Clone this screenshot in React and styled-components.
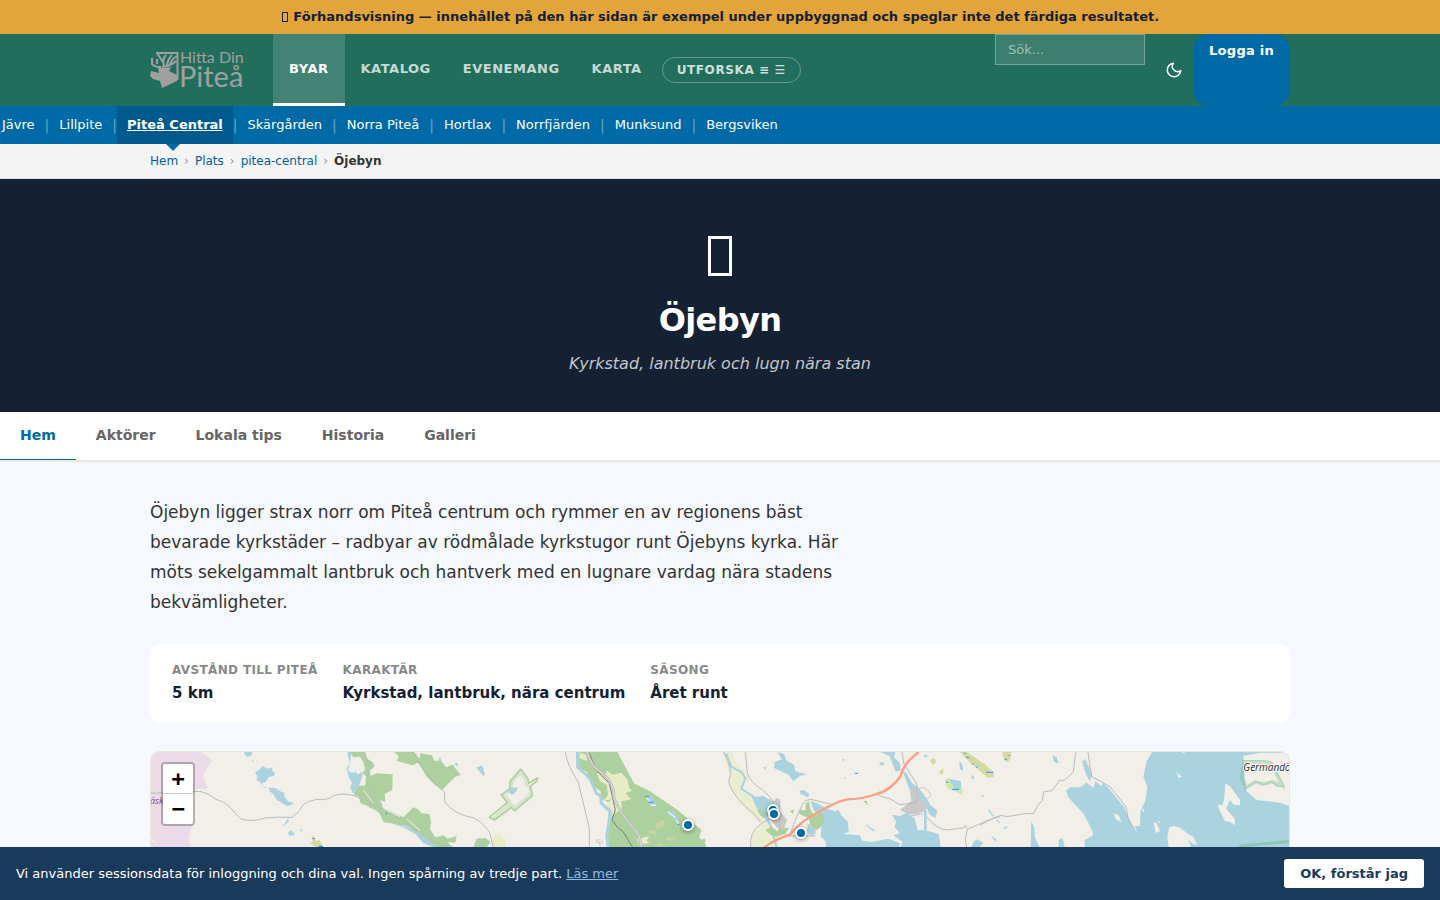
import React, { useState } from "react";
import styled, { createGlobalStyle } from "styled-components";

const GlobalStyle = createGlobalStyle`
  * {
    box-sizing: border-box;
  }

  body {
    margin: 0;
    background: #f5f8fd;
    color: #333;
    font-family: "DejaVu Sans", Verdana, sans-serif;
    font-size: 16px;
    overflow-x: hidden;
  }

  button, input {
    font-family: inherit;
  }
`;

const Container = styled.div`
  width: 100%;
  max-width: 1180px;
  margin: 0 auto;
  padding: 0 20px;
`;

const PreviewBanner = styled.div`
  padding: 8px 16px;
  background: #e2a43b;
  color: #142133;
  font-size: 13px;
  font-weight: 700;
  line-height: 18px;
  text-align: center;
`;

const BannerIcon = styled.span`
  display: inline-block;
  width: 6px;
  height: 10px;
  margin: 0 1px;
  border: 1px solid currentColor;
  vertical-align: -1px;
`;

const Header = styled.header`
  background: #216e5c;
`;

const HeaderRow = styled(Container)`
  display: flex;
  height: 72px;
`;

const LogoLink = styled.a`
  display: flex;
  align-items: center;
  width: 93px;
  margin-right: 30px;
`;

const MainNav = styled.nav`
  display: flex;
  flex: 1;
`;

const NavLink = styled.a`
  display: flex;
  align-items: center;
  padding: 0 16px;
  border-bottom: 3px solid ${(props) => (props.$active ? "#fff" : "transparent")};
  background: ${(props) => (props.$active ? "rgba(255, 255, 255, 0.15)" : "none")};
  color: ${(props) => (props.$active ? "#fff" : "rgba(255, 255, 255, 0.75)")};
  font-size: 13px;
  font-weight: 700;
  letter-spacing: 0.04em;
  text-transform: uppercase;
  text-decoration: none;
`;

const ExploreButton = styled.button`
  align-self: center;
  height: 26px;
  margin-left: 4px;
  padding: 0 14px;
  border: 1px solid rgba(255, 255, 255, 0.3);
  border-radius: 13px;
  background: none;
  color: rgba(255, 255, 255, 0.8);
  font-size: 12px;
  font-weight: 700;
  letter-spacing: 0.05em;
  white-space: nowrap;
`;

const Tools = styled.div`
  display: flex;
  align-items: flex-start;
`;

const SearchInput = styled.input`
  width: 150px;
  height: 31px;
  padding: 0 12px;
  border: 1px solid rgba(255, 255, 255, 0.3);
  border-radius: 0;
  background: rgba(255, 255, 255, 0.12);
  color: #fff;
  font-size: 13px;

  &::placeholder {
    color: rgba(255, 255, 255, 0.5);
  }
`;

const ThemeButton = styled.button`
  display: flex;
  align-self: center;
  margin: 0 10px 0 20px;
  padding: 0;
  border: none;
  background: none;
  color: #fff;
`;

const LoginLink = styled.a`
  align-self: stretch;
  padding: 8px 16px;
  border-radius: 16px;
  background: #006aa7;
  color: #fff;
  font-size: 13px;
  font-weight: 700;
  line-height: 18px;
  letter-spacing: 0.02em;
  text-decoration: none;
`;

const PlaceNav = styled.nav`
  position: relative;
  height: 38px;
  background: #006aa7;

  &::after {
    content: "";
    position: absolute;
    top: 100%;
    left: 166px;
    border: 7px solid transparent;
    border-top-color: #006aa7;
    border-bottom: none;
  }
`;

const PlaceList = styled.ul`
  display: flex;
  height: 100%;
  margin: 0 0 0 -8px;
  padding: 0;
  list-style: none;
  font-size: 13px;
  line-height: 38px;
  white-space: nowrap;

  li + li::before {
    content: "|";
    color: rgba(255, 255, 255, 0.4);
    font-size: 14px;
  }

  li {
    display: flex;
  }
`;

const PlaceLink = styled.a`
  padding: 0 10px;
  background: ${(props) => (props.$active ? "#005a8e" : "none")};
  color: #fff;
  font-weight: ${(props) => (props.$active ? 700 : 400)};
  text-decoration: ${(props) => (props.$active ? "underline" : "none")};
`;

const CrumbBar = styled.nav`
  border-bottom: 1px solid #ddd;
  background: #f4f4f4;
`;

const Crumbs = styled(Container)`
  display: flex;
  align-items: center;
  gap: 6px;
  height: 34px;
  color: #999;
  font-size: 12px;

  a {
    color: #00609c;
    text-decoration: none;
  }

  strong {
    color: #333;
  }
`;

const Hero = styled.section`
  display: flex;
  flex-direction: column;
  align-items: center;
  padding: 57px 20px 36px;
  background: #142133;
  color: #fff;
  text-align: center;
`;

const HeroIcon = styled.div`
  width: 24px;
  height: 40px;
  margin-bottom: 24px;
  border: 3px solid #fff;
`;

const HeroTitle = styled.h1`
  margin: 0 0 11px;
  font-size: 32px;
  line-height: 40px;
  letter-spacing: -0.02em;
`;

const Tagline = styled.p`
  margin: 0;
  color: rgba(255, 255, 255, 0.75);
  font-size: 16px;
  font-style: italic;
  line-height: 25px;
`;

const TabBar = styled.nav`
  display: flex;
  height: 50px;
  border-bottom: 2px solid #ebe8e0;
  background: #fff;
`;

const Tab = styled.a`
  padding: 0 20px;
  border-bottom: 1px solid ${(props) => (props.$active ? "#006aa7" : "transparent")};
  color: ${(props) => (props.$active ? "#006aa7" : "#666")};
  font-size: 14px;
  font-weight: 700;
  line-height: 46px;
  text-decoration: none;
`;

const Main = styled(Container)`
  padding-top: 35px;
  padding-bottom: 80px;
`;

const Intro = styled.p`
  max-width: 720px;
  margin: 0 0 27px;
  font-size: 17px;
  line-height: 30px;
`;

const Facts = styled.dl`
  display: flex;
  flex-wrap: wrap;
  gap: 25px;
  margin: 0 0 28px;
  padding: 16px 22px;
  border-radius: 10px;
  background: #fff;
`;

const Fact = styled.div`
  dt {
    color: #888;
    font-size: 12px;
    font-weight: 700;
    line-height: 20px;
    letter-spacing: 0.03em;
    text-transform: uppercase;
  }

  dd {
    margin: 0;
    color: #142133;
    font-size: 15px;
    font-weight: 700;
    line-height: 27px;
  }
`;

const MapFrame = styled.div`
  position: relative;
  height: 400px;
  border: 1px solid #e8e5dd;
  border-radius: 10px;
  background: #f2efe9;
  overflow: hidden;
`;

const MapDrawing = styled.svg`
  display: block;
  width: 1138px;
  min-width: 100%;
  height: 100%;
`;

const ZoomControl = styled.div`
  position: absolute;
  top: 10px;
  left: 10px;
  border: 2px solid rgba(0, 0, 0, 0.25);
  border-radius: 4px;
  background-clip: padding-box;
`;

const ZoomButton = styled.button`
  display: block;
  width: 30px;
  height: 30px;
  padding: 0;
  border: none;
  border-bottom: ${(props) => (props.$first ? "1px solid #ccc" : "none")};
  border-radius: ${(props) => (props.$first ? "2px 2px 0 0" : "0 0 2px 2px")};
  background: #fff;
  color: #000;
  font-family: "DejaVu Sans Mono", monospace;
  font-size: 22px;
  font-weight: 700;
  line-height: 30px;
`;

const Marker = styled.button`
  position: absolute;
  width: 12px;
  height: 12px;
  padding: 0;
  border: 2px solid #fff;
  border-radius: 50%;
  background: #006aa7;
  box-shadow: 0 1px 4px rgba(0, 0, 0, 0.4);
`;

const CookieBar = styled.div`
  position: fixed;
  right: 0;
  bottom: 0;
  left: 0;
  display: flex;
  align-items: center;
  justify-content: space-between;
  gap: 16px;
  padding: 12px 16px;
  background: #1a3a5c;
  color: #fff;
  font-size: 13px;

  a {
    color: #90bce0;
  }
`;

const AcceptButton = styled.button`
  height: 29px;
  padding: 0 16px;
  border: none;
  border-radius: 3px;
  background: #fff;
  color: #1a3a5c;
  font-size: 13px;
  font-weight: 700;
`;

const navItems = ["Byar", "Katalog", "Evenemang", "Karta"];

const places = [
  "Jävre",
  "Lillpite",
  "Piteå Central",
  "Skärgården",
  "Norra Piteå",
  "Hortlax",
  "Norrfjärden",
  "Munksund",
  "Bergsviken",
];

const tabs = ["Hem", "Aktörer", "Lokala tips", "Historia", "Galleri"];

const facts = [
  { label: "Avstånd till Piteå", value: "5 km" },
  { label: "Karaktär", value: "Kyrkstad, lantbruk, nära centrum" },
  { label: "Säsong", value: "Året runt" },
];

const markers = [
  { name: "Öjebyns kyrkstad", left: 616, top: 52 },
  { name: "Öjebyns kyrka", left: 617, top: 56 },
  { name: "Furunäset", left: 644, top: 75 },
  { name: "Svensbyn", left: 531, top: 67 },
];

function Logo() {
  return (
    <svg width="93" height="40" viewBox="0 0 93 40" overflow="visible" role="img" aria-label="Hitta Din Piteå">
      <g fill="none" stroke="#a0a0a0">
        <path d="M6 3H27.500V30" strokeWidth="2" />
        <path
          d="M7 3L13 12M2 8V14Q4 17 11 17M7 9V14M12 17Q21 16 26 11M14 16Q12 9 16 5M17 15Q18 9 22 5M20 14Q22 9 27 6"
          strokeWidth="2"
        />
      </g>
      <path
        fill="#a0a0a0"
        d="M1 21L9 23L8 17L14 18L21 17L19 21L27 25V31L12 38L10 31L3 29L0 26Z"
      />
      <g fontFamily="Lato, sans-serif" fill="#a0a0a0">
        <text x="30" y="13" fontSize="16">Hitta Din</text>
        <text x="29" y="37" fontSize="29">Piteå</text>
      </g>
    </svg>
  );
}

function MoonIcon() {
  return (
    <svg width="18" height="18" viewBox="0 0 24 24" fill="none" stroke="currentColor" strokeWidth="2" strokeLinecap="round" strokeLinejoin="round">
      <path d="M21 12.790A9 9 0 1 1 11.210 3 7 7 0 0 0 21 12.790z" />
    </svg>
  );
}

// Four map tiles side by side, each 840 units wide
function RegionMap() {
  return (
    <MapDrawing viewBox="0 0 3414 1194" preserveAspectRatio="xMinYMin slice" aria-hidden="true">
      <g transform="translate(-33 -36)">
        <path fill="#ebdbe8" d="M30 30H176L216 60L188 108L204 144L160 150L100 250L145 294L153 330V500H30V300L58 318L86 298L110 320L70 262L30 290Z" />
        <path fill="#ebdbe8" d="M30 150H160V250L145 294L153 330H120L86 298L58 318L30 290Z" />
        <g fill="#aad3df">
          <path d="M313 36H337L334 47L322 50L314 44Z" />
          <path d="M345 98L360 86L370 78L382 86L398 82L396 92L405 99L402 107L386 112L378 125L366 130V140L385 141L373 143L363 132L357 122H349L353 110Z" />
          <path d="M386 143L405 144L420 154L434 158L432 168L445 185L461 188L455 194L442 199L425 188L410 180L400 162L390 155Z" />
          <path d="M622 36H635L630 70L624 92L634 98L648 96L655 104L662 95L668 105L660 130L652 146L654 164L638 158L630 142L636 128L626 112L624 98L619 88L629 70Z" />
          <path d="M660 180L690 204L712 208L728 240L790 262L826 282L850 310L880 322H900L860 296L820 268L760 246L730 222L700 196Z" />
          <path d="M430 258L444 236L446 244ZM446 276L454 272L464 284L448 286ZM481 267L486 270L484 276ZM337 61L341 66Z" stroke="#aad3df" strokeWidth="2" />
        </g>
        <g fill="#add19e">
          <path d="M630 36H675L682 56L700 68L703 80L690 92L692 108L710 100L758 103L757 150L734 162L736 186L720 180L727 202L790 232L820 202L834 208L845 220L868 222L874 250L860 268L880 288L905 300V312L880 308L840 282L800 258L730 246L720 220L690 200L662 190L655 168L642 164L656 138L676 136L678 108L666 100L676 88L670 66L660 50L640 52Z" />
          <path d="M762 36H822L840 56L862 50L905 74V150L880 118L850 88L832 68L818 76L790 68L770 62L776 48Z" />
        </g>
        <path fill="#d6d99f" d="M515 290L522 288L528 302L538 300L550 320L532 324L508 308L518 306Z" />
        <path stroke="#3990f0" strokeWidth="4" d="M518 296H524M536 319H549M737 220H741" />
        <g fill="none" stroke="#bbb" strokeWidth="3">
          <path d="M30 160L180 154Q205 158 228 178Q252 184 266 198L302 236Q335 248 374 234Q416 230 456 232Q476 220 490 194Q505 182 530 178Q560 182 580 168Q604 156 646 168" />
          <path d="M646 168Q700 186 750 218T840 280T905 314M672 36L684 66L683 138L690 156L724 190V208M820 36L850 88L905 150" />
        </g>
        <path fill="none" stroke="#f2efe9" strokeWidth="3" d="M670 150L700 190M730 205L780 230M800 236L850 280" />
        <text x="30" y="192" fontFamily="Open Sans, Noto Sans, sans-serif" fontSize="27" fontStyle="italic" fill="#8c4a80">äsk</text>
      </g>

      <g transform="translate(807 -36)">
        <g fill="#add19e">
          <path d="M0 40L36 46L44 64L62 60L78 82L98 74L108 88L122 104L104 112L84 132L66 150L44 134L18 108L0 76Z" />
          <path d="M0 222L20 226L32 250L30 268L46 292L70 286L84 296L110 288L106 308L82 306L100 322H40L0 282ZM170 296L196 294L212 306L200 322H160Z" />
          <path d="M478 36H592L642 130L690 154L770 208L844 270L838 292L858 314V500H556L560 290L575 228L564 208L570 190L544 176L542 154L520 138L500 96L474 80Z" />
        </g>
        <g fill="#e8ecc6">
          <path d="M480 38L498 44L502 64L478 54ZM530 100L556 104L560 92L578 104L604 98L622 118L628 144L636 152L616 160L634 178L604 184L606 208L576 226L568 202L560 194L574 178L550 182L564 166L560 134L540 124ZM650 298L688 288L680 302L690 308L660 314Z" />
          <path d="M218 292L236 280L256 300L258 322H218Z" />
        </g>
        <path fill="#c8d3a2" d="M704 250L732 240L734 256L712 268ZM684 272L704 270L710 284L688 282ZM740 290L768 292L754 304L738 300ZM702 318L720 306L734 318Z" />
        <g fill="none" stroke="#aad3df">
          <path strokeWidth="9" d="M472 36L473 82Q506 108 514 124L529 160L542 168L544 190L570 214L568 240L560 286L565 322" />
          <path strokeWidth="7" d="M0 286L30 310L48 320M58 54L62 58M106 70L113 76" />
        </g>
        <g fill="none" stroke="#bbb" strokeWidth="3">
          <path d="M0 74L50 134L74 156V186Q104 224 162 234Q192 250 210 280L219 322M436 36Q442 78 474 124L508 264V322M0 276L44 306L80 320" />
          <path stroke="#7c7c7c" d="M506 36L530 92L568 130L586 210L576 240Q590 264 610 276L638 322" />
          <path strokeWidth="8" d="M502 36Q512 80 550 102Q584 132 582 174Q600 220 638 260Q662 284 664 322" />
          <path stroke="#e4e4de" d="M502 36Q512 80 550 102Q584 132 582 174Q600 220 638 260Q662 284 664 322" />
          <path stroke="#cfc9b6" d="M540 320V308Q524 308 530 300Q544 296 548 310" />
        </g>
        <g fill="none" stroke="#add19e" strokeLinejoin="round">
          <path strokeWidth="10" opacity="0.35" d="M222 234L272 190L252 164L276 148L274 126L301 98L318 118V134L332 142L330 166L284 202L272 192Z" />
          <path strokeWidth="5" d="M208 232L262 188L244 164L270 146L270 124L302 88L324 116L326 130L352 114L352 122L330 140L338 166L284 212L274 202L224 240Z" />
        </g>
        <path fill="#aad3df" d="M262 150L270 144L294 142L290 154L276 166ZM168 82L178 80L184 76L190 84L194 104L190 108L182 98ZM676 166L692 168L710 190L700 200L688 192ZM738 214L760 212L776 240L772 256L764 240ZM782 258L794 268L790 274Z" />
        <path stroke="#fff" strokeWidth="3" d="M678 174L690 182M692 196H708M744 216L766 232M770 242L776 252" />
        <path stroke="#3990f0" strokeWidth="3" d="M675 169H688M686 187H702M772 253H778" />
      </g>

      <g transform="translate(1647 -36)">
        <path fill="#e8ecc6" d="M70 36H94L108 74L130 86L150 120L124 144L158 172L170 210L202 250L236 270L232 322H152L158 286L184 250L140 206L90 146V98L74 64Z" opacity="0.7" />
        <g fill="#aad3df">
          <path d="M156 172L190 168L218 184L234 214L200 232L168 202Z" />
          <path d="M232 36L252 42L260 62L282 74L286 92L300 98L322 102L300 108L280 124L266 104L248 96L222 84L224 66L246 58ZM298 152L312 150L328 162L324 172L302 162Z" />
          <path d="M540 36H586L582 52L600 70L602 92L586 94L576 66L568 48ZM538 68L552 66L550 76L540 76ZM426 56L434 58L430 66Z" />
          <path d="M606 90L620 100L636 130L652 140L672 164L692 196L712 212L706 234L690 224L672 190L650 172L646 154L630 150Z" />
          <path d="M332 182L352 190L380 206L408 214L414 208L424 226L444 246L446 276L430 282L440 300L426 322H378L376 302L362 290L366 244L356 232L338 204ZM322 250L346 266L348 280L334 288L322 276Z" />
          <path d="M576 224L600 228L620 218L644 234L648 252L654 270L682 272L716 282L722 322H600L608 306L580 286L600 280L584 262L588 244ZM430 282L480 286L486 302L516 306L566 296L600 310L596 322H426Z" />
          <path d="M746 116L782 124L784 146L764 152L754 140ZM778 66L786 70L790 92L780 88ZM814 322L822 304L832 298L848 310L838 322ZM672 210L680 210V270L672 274ZM814 104L824 112L816 120ZM670 44L684 46L676 54Z" />
          <path d="M498 254L522 270L520 274ZM876 290L890 300L884 302Z" stroke="#aad3df" strokeWidth="2" />
        </g>
        <g fill="none" stroke="#aad3df" strokeWidth="6">
          <path d="M78 40L94 80L124 96L136 114L124 146L164 172L184 210L212 258L230 322" />
          <path strokeWidth="4" d="M614 100L630 146L676 208V280" />
        </g>
        <g fill="#add19e">
          <path d="M170 206L196 216L194 236L180 226ZM196 270L214 260L232 274L240 262L268 264L254 282L228 290L212 284ZM298 208L316 212L318 188L328 184L330 206L342 226L366 220L374 240L366 258L350 270L330 254L326 234L298 222ZM270 214L282 208L280 222ZM490 184L500 182L504 196ZM0 270L6 274L0 276ZM0 300L14 296L18 306L0 314Z" />
          <path fill="#c9e9ac" d="M734 120L746 112L752 130L788 150V164L770 156L744 146Z" />
          <path fill="#d6d99f" d="M780 36H800L850 70L880 96V110L862 112L832 86L810 68ZM690 60L704 54L708 66L698 76ZM716 94L730 86V98L724 106ZM188 82L200 80L196 90Z" />
        </g>
        <path fill="#aad3df" d="M756 124L782 124L784 146L764 148ZM824 70L848 78L844 86Z" />
        <path fill="#c9c9c9" d="M218 186L230 174L240 178L242 198L238 212L262 240L250 268L232 264L210 236L214 206ZM630 152L648 146L654 170L670 184L682 200L674 214L650 224L624 222L600 210L618 196L634 182Z" />
        <path fill="#aad3df" d="M232 188L240 184L236 196Z" />
        <g fill="none" stroke="#bbb" strokeWidth="3">
          <path d="M70 36Q102 90 86 124Q92 156 134 198Q164 220 182 246M136 36L142 100Q150 126 190 152Q220 176 236 216L240 270L270 290M270 282Q300 200 316 182L332 178L400 194M152 322Q146 280 182 252L226 226M606 36L612 72L650 132L652 162L648 188L600 194Q570 172 540 168L530 160M680 230Q706 266 740 270L790 264L796 256L802 268Q840 252 860 242L900 230M802 268L796 300L800 322M270 288H346" />
          <path stroke="#c9c9c9" d="M656 146Q676 136 690 160Q694 176 678 176L662 160ZM606 206L662 192L686 190M626 228L670 222" />
        </g>
        <path fill="none" stroke="#fa9e84" strokeWidth="7" d="M192 322Q226 298 270 284Q300 244 356 216Q410 184 442 178Q484 178 530 162Q574 150 602 108Q610 70 656 36" />
        <path stroke="#3990f0" strokeWidth="3" d="M464 100H474M756 148H777M858 97H879M738 127H744M798 52H807M828 82H832M819 70V74M795 38V42" />
        <path fill="#c9c9c9" d="M428 114L436 111L438 116Z" />
      </g>

      <g transform="translate(2487 -36)">
        <path fill="#aad3df" d="M516 36H960V600H320L314 300L340 286L334 266L310 220L286 196L264 170L258 152L270 142L300 142L320 128L340 144L346 124L364 138L370 128L384 142L410 174L432 200L444 230L474 284L464 258L480 258L482 210L496 184L502 140L490 110L500 64Z" />
        <path fill="#aad3df" d="M152 322L154 242L164 268L164 290L178 322ZM236 322V300L248 294L254 322ZM306 64L316 58L326 80L336 104L330 124L318 104ZM218 46L230 52L236 70L222 66Z" />
        <g fill="#f2efe9">
          <path d="M604 36H616L612 40ZM588 96L606 110L596 114ZM736 130L750 138L780 180V196L760 194L750 180L738 206L764 236L766 256L750 246L734 242L722 218L712 194L726 196L732 182ZM790 48L840 38H928V198L900 188L862 184L830 180L800 154L792 112ZM568 262L584 258L602 264L624 282L640 290L652 314L640 312L624 300L634 322H566L562 290ZM400 220L416 226L424 246L408 238ZM520 246L530 250L540 272L528 280ZM484 204L494 210L490 216ZM534 240L540 246L536 250Z" />
        </g>
        <path fill="#d6d99f" d="M66 36H94L92 56L84 66L74 62ZM0 66L14 72L24 86L42 98L40 110L24 114L0 92Z" />
        <path stroke="#3990f0" strokeWidth="3" d="M74 58H81M18 97H39M87 45V48" />
        <path fill="none" stroke="#aad3df" strokeWidth="4" d="M26 208L40 230M50 240L60 248M0 304L10 312M6 168H12M72 266L82 260" />
        <g fill="none" stroke="#bbb" strokeWidth="3">
          <path d="M0 256Q44 230 64 226L80 230L140 220L160 222L174 196L188 180L190 156L216 152L238 122L254 120L280 96L284 60L288 36M324 36L330 80L336 110L390 140L438 200L446 244L464 268" />
        </g>
        <g fill="none" stroke="#7fc096" opacity="0.6">
          <path strokeWidth="10" opacity="0.6" d="M796 66L788 110L798 142L826 126L850 132L878 126L906 138L876 72L852 66Z" />
          <path strokeWidth="4" d="M790 62L782 114L796 146L828 124L850 134L874 124L890 138L912 138L874 66L852 62Z" />
          <path strokeWidth="9" d="M782 332V318L930 304" />
        </g>
        <text x="790" y="92" fontFamily="Open Sans, Noto Sans, sans-serif" fontSize="30" fontStyle="italic" fill="#222" stroke="#fff" strokeWidth="5" paintOrder="stroke">Germandön</text>
      </g>
    </MapDrawing>
  );
}

export default function App() {
  const [cookiesOpen, setCookiesOpen] = useState(true);

  return (
    <>
      <GlobalStyle />
      <PreviewBanner>
        <BannerIcon /> Förhandsvisning — innehållet på den här sidan är exempel under uppbyggnad och speglar inte det färdiga resultatet.
      </PreviewBanner>

      <Header>
        <HeaderRow>
          <LogoLink href="#">
            <Logo />
          </LogoLink>
          <MainNav>
            {navItems.map((item, i) => (
              <NavLink key={item} href="#" $active={i === 0}>
                {item}
              </NavLink>
            ))}
            <ExploreButton>UTFORSKA ≡ ☰</ExploreButton>
          </MainNav>
          <Tools>
            <SearchInput type="search" placeholder="Sök..." aria-label="Sök" />
            <ThemeButton aria-label="Byt tema">
              <MoonIcon />
            </ThemeButton>
            <LoginLink href="#">Logga in</LoginLink>
          </Tools>
        </HeaderRow>
      </Header>

      <PlaceNav>
        <PlaceList>
          {places.map((place) => (
            <li key={place}>
              <PlaceLink href="#" $active={place === "Piteå Central"}>
                {place}
              </PlaceLink>
            </li>
          ))}
        </PlaceList>
      </PlaceNav>

      <CrumbBar aria-label="Brödsmulor">
        <Crumbs>
          <a href="#">Hem</a>
          <span>›</span>
          <a href="#">Plats</a>
          <span>›</span>
          <a href="#">pitea-central</a>
          <span>›</span>
          <strong>Öjebyn</strong>
        </Crumbs>
      </CrumbBar>

      <Hero>
        <HeroIcon />
        <HeroTitle>Öjebyn</HeroTitle>
        <Tagline>Kyrkstad, lantbruk och lugn nära stan</Tagline>
      </Hero>

      <TabBar>
        {tabs.map((tab, i) => (
          <Tab key={tab} href="#" $active={i === 0}>
            {tab}
          </Tab>
        ))}
      </TabBar>

      <Main as="main">
        <Intro>
          Öjebyn ligger strax norr om Piteå centrum och rymmer en av regionens bäst bevarade kyrkstäder – radbyar av
          rödmålade kyrkstugor runt Öjebyns kyrka. Här möts sekelgammalt lantbruk och hantverk med en lugnare vardag
          nära stadens bekvämligheter.
        </Intro>

        <Facts>
          {facts.map((fact) => (
            <Fact key={fact.label}>
              <dt>{fact.label}</dt>
              <dd>{fact.value}</dd>
            </Fact>
          ))}
        </Facts>

        <MapFrame>
          <RegionMap />
          {markers.map((m) => (
            <Marker key={m.name} aria-label={m.name} style={{ left: m.left, top: m.top }} />
          ))}
          <ZoomControl>
            <ZoomButton $first aria-label="Zooma in">+</ZoomButton>
            <ZoomButton aria-label="Zooma ut">−</ZoomButton>
          </ZoomControl>
        </MapFrame>
      </Main>

      {cookiesOpen && (
        <CookieBar>
          <span>
            Vi använder sessionsdata för inloggning och dina val. Ingen spårning av tredje part. <a href="#">Läs mer</a>
          </span>
          <AcceptButton onClick={() => setCookiesOpen(false)}>OK, förstår jag</AcceptButton>
        </CookieBar>
      )}
    </>
  );
}
